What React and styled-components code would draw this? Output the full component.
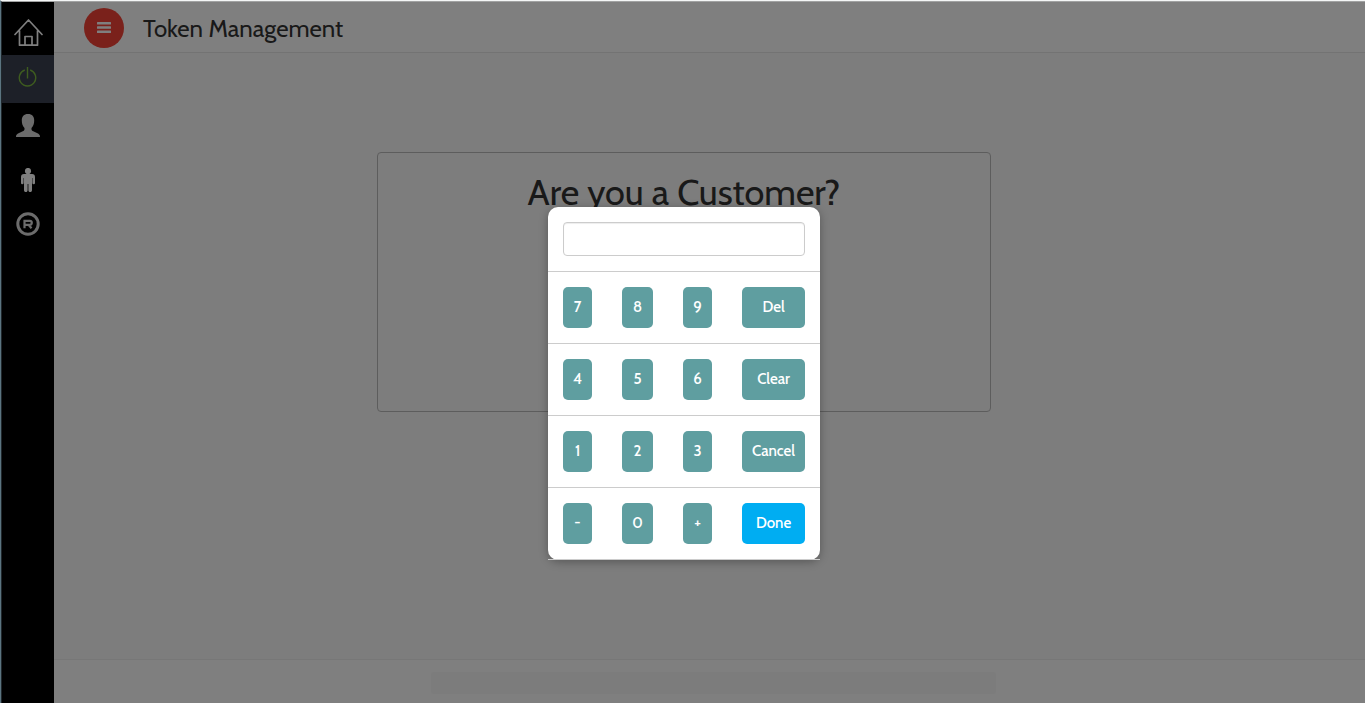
import React, { useState } from "react";
import styled, { createGlobalStyle } from "styled-components";

const GlobalStyle = createGlobalStyle`
  *, *::before, *::after { box-sizing: border-box; }
  body {
    margin: 0;
    background: #fafafa;
    color: #333;
    font-family: Cabin, Lato, "Liberation Sans", sans-serif;
  }
`;

const Frame = styled.div`
  position: relative;
  display: flex;
  min-height: 100vh;
  border-top: 2px ridge #f4f6f6;
  border-left: 2px ridge #5b7480;
`;

const Sidebar = styled.nav`
  display: flex;
  flex-direction: column;
  flex: none;
  width: 52px;
  background: #000;
`;

const SideLink = styled.a`
  display: flex;
  align-items: center;
  justify-content: center;
  height: ${(p) => p.$height}px;
  padding: ${(p) => p.$padding || "0"};
  color: ${(p) => p.$color || "#d8d8d8"};
  background: ${(p) => (p.$active ? "#3a4050" : "transparent")};
`;

const Page = styled.div`
  display: flex;
  flex-direction: column;
  flex: 1;
  min-width: 0;
`;

const Header = styled.header`
  display: flex;
  align-items: center;
  gap: 19px;
  height: 51px;
  padding: 2px 30px 0;
  background: #fff;
  border-bottom: 1px solid #e7e7e7;
`;

const MenuButton = styled.button`
  display: flex;
  align-items: center;
  justify-content: center;
  width: 40px;
  height: 40px;
  padding: 0;
  border: 0;
  border-radius: 50%;
  background: #f44336;
  color: #fff;
`;

const Title = styled.h1`
  margin: 0;
  padding-top: 2px;
  font-size: 24px;
  line-height: 32px;
  font-weight: 400;
`;

const Main = styled.main`
  display: grid;
  grid-template-columns: 323fr 614fr 374fr;
  align-items: start;
  flex: 1;
  padding-top: 99px;
`;

const Card = styled.section`
  grid-column: 2;
  min-height: 260px;
  padding: 19px 20px;
  border: 1px solid #bbb;
  border-radius: 4px;
`;

const Question = styled.h2`
  margin: 0;
  font-size: 36px;
  line-height: 40px;
  font-weight: 400;
  text-align: center;
`;

const Footer = styled.footer`
  display: grid;
  grid-template-columns: 377fr 565fr 369fr;
  height: 44px;
  padding-top: 12px;
  background: #fff;
  border-top: 1px solid #eee;
`;

const FooterBar = styled.div`
  grid-column: 2;
  height: 22px;
  border-radius: 2px;
  background: #f9f9f9;
`;

const Backdrop = styled.div`
  position: absolute;
  inset: 0;
  display: flex;
  justify-content: center;
  align-items: flex-start;
  padding-top: 205px;
  background: rgba(0, 0, 0, 0.5);
`;

const Keypad = styled.div`
  width: 272px;
  border-radius: 10px;
  background: #fff;
  box-shadow: 0 2px 10px rgba(0, 0, 0, 0.3);
`;

const Row = styled.div`
  display: grid;
  grid-template-columns: ${(p) => (p.$single ? "1fr" : "29px 31px 29px 63px")};
  gap: 30px;
  padding: 15px;
  border-bottom: 1px solid #ccc;
`;

const Display = styled.input`
  width: 100%;
  height: 34px;
  padding: 6px 12px;
  border: 1px solid #ccc;
  border-radius: 4px;
  background: #fff;
  box-shadow: inset 0 1px 1px rgba(0, 0, 0, 0.075);
  font: inherit;
  font-size: 15px;
`;

const Key = styled.button`
  height: 41px;
  padding: 0 0 2px 1px;
  border: 0;
  border-radius: 5px;
  background: ${(p) => (p.$primary ? "#00adf2" : "#5f9ea0")};
  color: #fff;
  font-family: inherit;
  font-size: 15px;
  font-weight: 500;
  line-height: 20px;
`;

const HomeIcon = () => (
  <svg width="30" height="30" viewBox="0 0 30 30" fill="none" stroke="currentColor" strokeWidth="1.700" strokeLinejoin="round" strokeLinecap="round">
    <path d="M2 17.500 15.500 3 29 17.500M6.500 13.500V28.200h18V13.500M12 28v-8.500h7V28" />
  </svg>
);

const PowerIcon = () => (
  <svg width="20" height="22" viewBox="0 0 20 22" fill="none" stroke="currentColor" strokeWidth="1.400">
    <path d="M9.500 1v11.500M6.800 4a8.200 8.200 0 1 0 5.400 0" />
  </svg>
);

const UserIcon = () => (
  <svg width="24" height="24" viewBox="0 0 24 24" fill="currentColor">
    <path d="M12 0c4.200 0 6.200 2.500 6.200 6.500 0 3.400-.9 5.600-2.700 7.400v1.400c0 .8.500 1.300 1.200 1.700l5.300 2.600c1.500.8 2 1.800 2 3.400H0c0-1.600.5-2.600 2-3.400l5.300-2.600c.7-.4 1.200-.9 1.200-1.700v-1.400c-1.800-1.800-2.700-4-2.700-7.400C5.800 2.500 7.800 0 12 0z" />
  </svg>
);

const PersonIcon = () => (
  <svg width="14" height="24" viewBox="0 0 14 24" fill="currentColor">
    <circle cx="7" cy="3" r="3.100" />
    <path d="M3 6h8a3 3 0 0 1 3 3v6a1.300 1.300 0 0 1-2.600 0v-5H11v12.300a1.700 1.700 0 0 1-3.600 0V16h-.8v6.300a1.700 1.700 0 0 1-3.600 0V10h-.4v5A1.300 1.300 0 0 1 0 15V9a3 3 0 0 1 3-3z" />
  </svg>
);

const RegisteredIcon = () => (
  <svg width="24" height="24" viewBox="0 0 24 24" fill="none" stroke="currentColor">
    <circle cx="12" cy="12" r="10.200" strokeWidth="3" />
    <path d="M8.500 16.200V8.800h5.300a2 2 0 0 1 0 4H8.500M12.500 12.800l3 3.400" strokeWidth="2.200" />
  </svg>
);

const MenuIcon = () => (
  <svg width="14" height="12" viewBox="0 0 14 12" fill="currentColor">
    <rect width="14" height="2.600" rx=".5" />
    <rect y="4.200" width="14" height="2.600" rx=".5" />
    <rect y="8.400" width="14" height="2.600" rx=".5" />
  </svg>
);

const LINKS = [
  { label: "Home", Icon: HomeIcon, height: 53, padding: "6px 0 0", color: "#fff" },
  { label: "Tokens", Icon: PowerIcon, height: 48, padding: "0 0 4px", color: "#7cb83e", active: true },
  { label: "Customers", Icon: UserIcon, height: 44, padding: "2px 0 0" },
  { label: "Visitors", Icon: PersonIcon, height: 65, color: "#fff" },
  { label: "Registered", Icon: RegisteredIcon, height: 24 },
];

const ROWS = [
  ["7", "8", "9", "Del"],
  ["4", "5", "6", "Clear"],
  ["1", "2", "3", "Cancel"],
  ["-", "0", "+", "Done"],
];

export default function App() {
  const [value, setValue] = useState("");
  const press = (key) => {
    if (key === "Del") setValue((v) => v.slice(0, -1));
    else if (key === "Clear" || key === "Cancel") setValue("");
    else if (key !== "Done") setValue((v) => v + key);
  };

  return (
    <>
      <GlobalStyle />
      <Frame>
        <Sidebar aria-label="Main">
          {LINKS.map(({ label, Icon, height, padding, color, active }) => (
            <SideLink key={label} href="#" aria-label={label} $height={height} $padding={padding} $color={color} $active={active}>
              <Icon />
            </SideLink>
          ))}
        </Sidebar>
        <Page>
          <Header>
            <MenuButton type="button" aria-label="Menu">
              <MenuIcon />
            </MenuButton>
            <Title>Token Management</Title>
          </Header>
          <Main>
            <Card>
              <Question>Are you a Customer?</Question>
            </Card>
          </Main>
          <Footer>
            <FooterBar />
          </Footer>
        </Page>
        <Backdrop>
          <Keypad role="dialog" aria-label="Keypad">
            <Row $single>
              <Display aria-label="Number" value={value} onChange={(e) => setValue(e.target.value)} />
            </Row>
            {ROWS.map((keys) => (
              <Row key={keys[0]}>
                {keys.map((key) => (
                  <Key key={key} type="button" $primary={key === "Done"} onClick={() => press(key)}>
                    {key}
                  </Key>
                ))}
              </Row>
            ))}
          </Keypad>
        </Backdrop>
      </Frame>
    </>
  );
}
